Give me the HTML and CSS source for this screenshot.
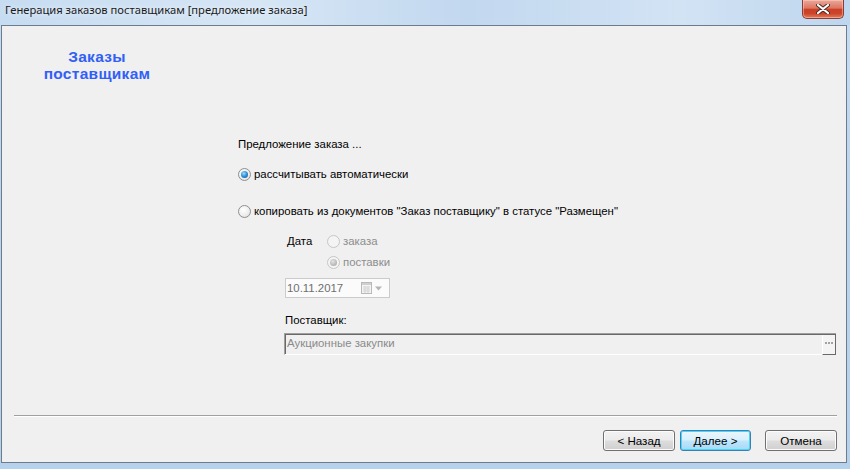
FILE: index.html
```html
<!DOCTYPE html>
<html lang="ru">
<head>
    <meta charset="UTF-8">
    <title>Генерация заказов поставщикам</title>
    <link rel="stylesheet" href="styles.css">
</head>
<body>
<div class="window">
    <div class="titlebar">
        <span class="caption">Генерация заказов поставщикам [предложение заказа]</span>
        <button class="close" title="Закрыть">
            <svg width="14" height="10" viewBox="0 0 14 10">
                <path d="M2 1 L12 9 M12 1 L2 9" stroke="#4a2a25" stroke-width="4" stroke-linecap="round"/>
                <path d="M2 1 L12 9 M12 1 L2 9" stroke="#ffffff" stroke-width="2.2" stroke-linecap="round"/>
            </svg>
        </button>
    </div>

    <div class="client">
        <div class="body">
            <div class="brand">Заказы<br>поставщикам</div>

            <form class="options">
                <p class="lead">Предложение заказа ...</p>

                <label class="radio-row first">
                    <span class="radio checked"></span>рассчитывать автоматически
                </label>
                <label class="radio-row second">
                    <span class="radio"></span>копировать из документов "Заказ поставщику" в статусе "Размещен"
                </label>

                <div class="copy-params">
                    <div class="date-kind">
                        <span class="date-label">Дата</span>
                        <div class="date-radios">
                            <label class="radio-row disabled"><span class="radio"></span>заказа</label>
                            <label class="radio-row disabled"><span class="radio checked"></span>поставки</label>
                        </div>
                    </div>

                    <div class="date-box">
                        <span class="date-value">10.11.2017</span>
                        <span class="date-btn">
                            <svg width="24" height="14" viewBox="0 0 24 14">
                                <rect x="0.5" y="1.5" width="10" height="11" fill="#f4f4f4" stroke="#b9b9b9"/>
                                <rect x="1" y="2" width="9" height="2" fill="#cfcfcf"/>
                                <path d="M2 6h7M2 8h7M2 10h7M4 5v7M7 5v7" stroke="#d4d4d4" stroke-width="1"/>
                                <path d="M14 5.5h7l-3.5 4z" fill="#b5b5b5"/>
                            </svg>
                        </span>
                    </div>

                    <p class="field-label">Поставщик:</p>
                    <div class="lookup">
                        <span class="lookup-value">Аукционные закупки</span>
                        <span class="lookup-btn"><i></i><i></i><i></i></span>
                    </div>
                </div>
            </form>
        </div>

        <div class="footer">
            <div class="separator"></div>
            <div class="buttons">
                <button type="button" class="btn">&lt; Назад</button>
                <button type="button" class="btn default">Далее &gt;</button>
                <button type="button" class="btn cancel">Отмена</button>
            </div>
        </div>
    </div>
</div>
</body>
</html>
```

FILE: styles.css
```css
* {
    box-sizing: border-box;
}
body {
    margin: 0;
    width: 850px;
    height: 469px;
    overflow: hidden;
    font-family: "Liberation Sans", Arial, sans-serif;
    font-size: 11.4px;
    color: #000;
}
p {
    margin: 0;
}

/* window frame with aero glass */
.window {
    width: 850px;
    height: 469px;
    background: linear-gradient(180deg, #c6dcf1 0%, #bcd5ed 40%, #b6d1ec 100%);
    display: flex;
    flex-direction: column;
}
.titlebar {
    height: 25px;
    display: flex;
    align-items: flex-start;
    justify-content: space-between;
    background: linear-gradient(90deg, #c6dcf1 0%, #d6e6f5 30%, #c2d8ef 55%, #d2e3f4 80%, #bed6ee 100%);
}
.caption {
    font-family: "Noto Sans", "Open Sans", sans-serif;
    font-size: 11.2px;
    line-height: 20px;
    margin-left: 5px;
    color: #1b1b1b;
    text-shadow: 0 0 6px rgba(255, 255, 255, 0.9);
}
.close {
    width: 42px;
    height: 19px;
    margin-right: 6px;
    padding: 0;
    border: 1px solid #8c3c32;
    border-top: none;
    border-radius: 0 0 5px 5px;
    background: linear-gradient(180deg, #eba99a 0%, #dc7561 45%, #cb4028 52%, #cc4429 75%, #e27c5c 100%);
    box-shadow: inset 0 0 0 1px rgba(255, 220, 210, 0.45);
    display: flex;
    align-items: center;
    justify-content: center;
}

/* client area */
.client {
    height: 438px;
    margin: 0 3px 0 1px;
    border: 1px solid #6d7c8c;
    background: #f0f0f0;
    display: flex;
    flex-direction: column;
}
.body {
    display: flex;
    flex: 1;
}
.brand {
    width: 190px;
    padding-top: 22px;
    text-align: center;
    color: #3160f6;
    font-weight: bold;
    font-size: 15.5px;
    line-height: 17px;
    letter-spacing: 0.3px;
}
.options {
    flex: 1;
    margin-left: 46px;
    padding: 110px 10px 0 0;
}
.lead {
    line-height: 16px;
}
.radio-row {
    display: flex;
    align-items: center;
    height: 16px;
    line-height: 16px;
}
.radio-row.first {
    margin-top: 14px;
}
.radio-row.second {
    margin-top: 21px;
}
.radio {
    width: 13px;
    height: 13px;
    margin-right: 3px;
    border-radius: 50%;
    border: 1px solid #8f8f8f;
    background: radial-gradient(circle at 40% 35%, #ffffff 0%, #eeeeee 55%, #d4d4d4 100%);
    position: relative;
    flex: none;
}
.radio.checked::after {
    content: "";
    position: absolute;
    left: 2px;
    top: 2px;
    width: 7px;
    height: 7px;
    border-radius: 50%;
    background: radial-gradient(circle at 40% 35%, #9fdcff 0%, #2b8fd6 50%, #0f4f94 100%);
}
.radio-row.disabled {
    color: #8d8d8d;
}
.radio-row.disabled .radio {
    border-color: #c6c6c6;
    background: #f4f4f4;
}
.radio-row.disabled .radio.checked::after {
    background: radial-gradient(circle at 40% 35%, #e4e4e4 0%, #b3b3b3 70%, #a5a5a5 100%);
}

/* copy from documents block */
.copy-params {
    margin-left: 47px;
    margin-top: 14px;
}
.date-kind {
    display: flex;
}
.date-label {
    width: 40px;
    margin-left: 2px;
    line-height: 16px;
}
.date-radios {
    display: flex;
    flex-direction: column;
    gap: 5px;
}
.date-box {
    width: 105px;
    height: 20px;
    margin-top: 8px;
    border: 1px solid #cbcbcb;
    background: #fbfbfb;
    display: flex;
    align-items: center;
    justify-content: space-between;
    padding: 0 4px 0 1px;
}
.date-value {
    color: #6f6f6f;
}
.date-btn {
    display: flex;
    align-items: center;
}
.field-label {
    margin-top: 14px;
    line-height: 16px;
}
.lookup {
    height: 22px;
    margin-top: 5px;
    margin-left: -1px;
    border-top: 1px solid #a0a0a0;
    border-left: 1px solid #a0a0a0;
    border-bottom: 1px solid #ffffff;
    box-shadow: inset 1px 1px 0 #696969;
    display: flex;
    align-items: stretch;
    justify-content: space-between;
    background: #f0f0f0;
}
.lookup-value {
    color: #8a8a8a;
    padding-left: 2px;
    line-height: 19px;
}
.lookup-btn {
    width: 14px;
    height: 20px;
    margin-top: 1px;
    border-right: 1px solid #696969;
    border-bottom: 1px solid #696969;
    border-left: 1px solid #ffffff;
    background: #f4f4f4;
    display: flex;
    justify-content: center;
    gap: 1px;
    padding-top: 7px;
}
.lookup-btn i {
    width: 2px;
    height: 2px;
    background: #a3a3a3;
}

/* wizard buttons */
.footer {
    padding: 0 9px 11px 12px;
}
.separator {
    border-top: 1px solid #a0a0a0;
    border-bottom: 1px solid #ffffff;
}
.buttons {
    display: flex;
    justify-content: flex-end;
    gap: 5px;
    margin-top: 13px;
}
.btn {
    width: 72px;
    height: 21px;
    padding: 0;
    font-family: "Liberation Sans", Arial, sans-serif;
    font-size: 11.6px;
    color: #000;
    border: 1px solid #707070;
    border-radius: 3px;
    background: linear-gradient(180deg, #f2f2f2 0%, #ebebeb 48%, #dddddd 52%, #cfcfcf 100%);
    box-shadow: inset 0 0 0 1px #fcfcfc;
}
.btn.default {
    width: 71px;
    border-color: #3c7fb1;
    background: linear-gradient(180deg, #eaf6fd 0%, #d9f0fc 48%, #bee6fd 52%, #a7d9f5 100%);
    box-shadow: inset 0 0 0 1px #48d6fb;
}
.btn.cancel {
    margin-left: 9px;
}
```
